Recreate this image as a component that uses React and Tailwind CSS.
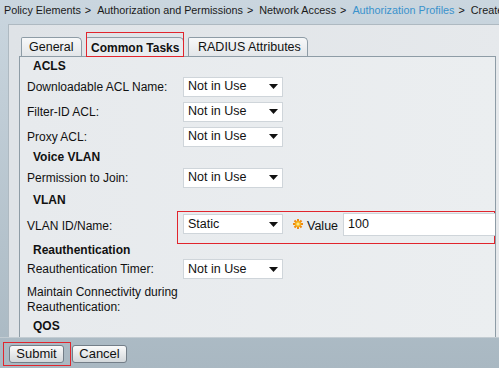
import React from "react";

const Arrow = () => (
  <svg width="9" height="5" viewBox="0 0 9 5">
    <path d="M0 0h9L4.5 5z" fill="#111" />
  </svg>
);

const Select = ({ value }) => (
  <div className="w-[100px] h-[20px] shrink-0 bg-white border border-[#cfd5da] flex items-center justify-between pl-[4px] pr-[4px] text-[12.5px] text-[#111]">
    <span>{value}</span>
    <Arrow />
  </div>
);

const Heading = ({ children, h }) => (
  <div className={`${h} shrink-0 flex items-center pl-[13px] font-bold text-[12px] text-[#111]`}>
    {children}
  </div>
);

const Row = ({ label, value, h = "h-[25px]" }) => (
  <div className={`${h} shrink-0 flex items-center pl-[7px]`}>
    <div className="w-[156px] shrink-0">{label}</div>
    <Select value={value} />
  </div>
);

const Sun = () => (
  <svg width="10" height="10" viewBox="0 0 10 10">
    <g fill="#f08a12">
      <rect x="4" y="0" width="2" height="10" />
      <rect x="0" y="4" width="10" height="2" />
      <rect x="4" y="0" width="2" height="10" transform="rotate(45 5 5)" />
      <rect x="4" y="0" width="2" height="10" transform="rotate(-45 5 5)" />
    </g>
    <circle cx="5" cy="5" r="3" fill="#f5b21a" />
    <circle cx="5" cy="5" r="1.6" fill="#ffe98a" />
  </svg>
);

const crumbs = [
  { t: "Policy Elements" },
  { t: "Authorization and Permissions" },
  { t: "Network Access" },
  { t: "Authorization Profiles", link: true },
  { t: "Create" },
];

export default function App() {
  return (
    <div
      className="w-[499px] h-[368px] overflow-hidden flex flex-col bg-gradient-to-b from-[#cad6df] to-[#a9b8c2] text-[12px] text-[#111]"
      style={{ fontFamily: '"Liberation Sans", Arial, sans-serif' }}
    >
      {/* breadcrumb */}
      <div className="h-[21px] shrink-0 flex items-center pl-[4px] text-[10.8px] whitespace-nowrap">
        {crumbs.map((c, i) => (
          <span key={c.t} className="flex items-center">
            <span className={c.link ? "text-[#3a92cc]" : "text-[#1a1a1a]"}>{c.t}</span>
            {i < crumbs.length - 1 && <span className="ml-[4px] mr-[6px]">&gt;</span>}
          </span>
        ))}
      </div>

      {/* outer panel */}
      <div className="ml-[8px] mt-[3px] h-[313px] shrink-0 flex flex-col bg-gradient-to-r from-[#dfe3e7] to-[#e6e9ec] border-l border-t border-[#aeb9c1] pl-[10px] pt-[12px]">
        {/* tabs */}
        <div className="h-[19px] shrink-0 flex items-end gap-[4px] pl-[2px] relative z-10 whitespace-nowrap">
          <div className="w-[61px] h-[19px] flex items-center pl-[7px] border border-b-0 border-[#8e9ca6] rounded-tl-[2px] rounded-tr-[5px] bg-gradient-to-b from-[#f7f8f9] to-[#e3e6e9] text-[12.5px]">
            General
          </div>
          <div className="relative w-[98px] h-[20px] -mb-px flex items-center pl-[4px] border border-b-0 border-[#8e9ca6] rounded-tl-[2px] rounded-tr-[5px] bg-[#e9ecef] font-bold text-[12px]">
            Common Tasks
            <div className="absolute left-[-1px] top-[-6px] w-[98px] h-[25px] border border-[#e1252d]" />
          </div>
          <div className="w-[120px] h-[19px] flex items-center pl-[9px] border border-b-0 border-[#8e9ca6] rounded-tl-[2px] rounded-tr-[5px] bg-gradient-to-b from-[#f7f8f9] to-[#e3e6e9] text-[12.5px]">
            RADIUS Attributes
          </div>
        </div>

        {/* content */}
        <div className="flex-1 mr-[3px] overflow-hidden border-t border-l border-r border-[#8e9ca6] bg-gradient-to-r from-[#e7eaed] to-[#ebeef0] flex flex-col">
          <Heading h="h-[17px]">ACLS</Heading>
          <Row label="Downloadable ACL Name:" value="Not in Use" />
          <Row label="Filter-ID ACL:" value="Not in Use" />
          <Row label="Proxy ACL:" value="Not in Use" />
          <Heading h="h-[16px]">Voice VLAN</Heading>
          <Row label="Permission to Join:" value="Not in Use" />
          <Heading h="h-[20px]">VLAN</Heading>

          <div className="h-[33px] shrink-0 flex items-start pl-[7px]">
            <div className="w-[150px] shrink-0 mt-[7px]">VLAN ID/Name:</div>
            <div className="w-[318px] h-[33px] shrink-0 mt-[1px] border border-[#e1252d] flex items-start pl-[5px] pt-[1px]">
              <div className="mt-[1px]">
                <Select value="Static" />
              </div>
              <div className="ml-[10px] mt-[6px] flex items-center">
                <Sun />
              </div>
              <div className="ml-[4px] mt-[4px] text-[12.5px]">Value</div>
              <div className="ml-[5px] w-[160px] h-[23px] shrink-0 bg-white border border-[#cfd5da] pl-[4px] flex items-center text-[12.5px]">
                100
              </div>
            </div>
          </div>

          <Heading h="h-[13px]">Reauthentication</Heading>
          <Row label="Reauthentication Timer:" value="Not in Use" h="h-[26px]" />
          <div className="pl-[7px] pt-[3px] leading-[15px] shrink-0">
            <div>Maintain Connectivity during</div>
            <div>Reauthentication:</div>
          </div>
          <Heading h="h-[22px]">QOS</Heading>
          <div className="h-[25px] shrink-0 flex items-start pl-[163px]">
            <div className="w-[100px] h-[20px] bg-white border border-[#cfd5da]" />
          </div>
        </div>
      </div>

      {/* bottom bar */}
      <div className="flex-1 border-t border-[#c3ccd2] flex items-start pl-[3px] pt-[4px]">
        <div className="border border-[#e1252d] pl-[5px] pr-[6px] pt-[2px] pb-[2px]">
          <button className="w-[55px] h-[18px] flex items-center justify-center border border-[#737e88] rounded-[3px] bg-gradient-to-b from-[#fafafa] to-[#d3d8db] text-[13px] text-[#111]">
            Submit
          </button>
        </div>
        <button className="ml-[1px] mt-[3px] w-[55px] h-[18px] flex items-center justify-center border border-[#737e88] rounded-[3px] bg-gradient-to-b from-[#fafafa] to-[#d3d8db] text-[13px] text-[#111]">
          Cancel
        </button>
      </div>
    </div>
  );
}
